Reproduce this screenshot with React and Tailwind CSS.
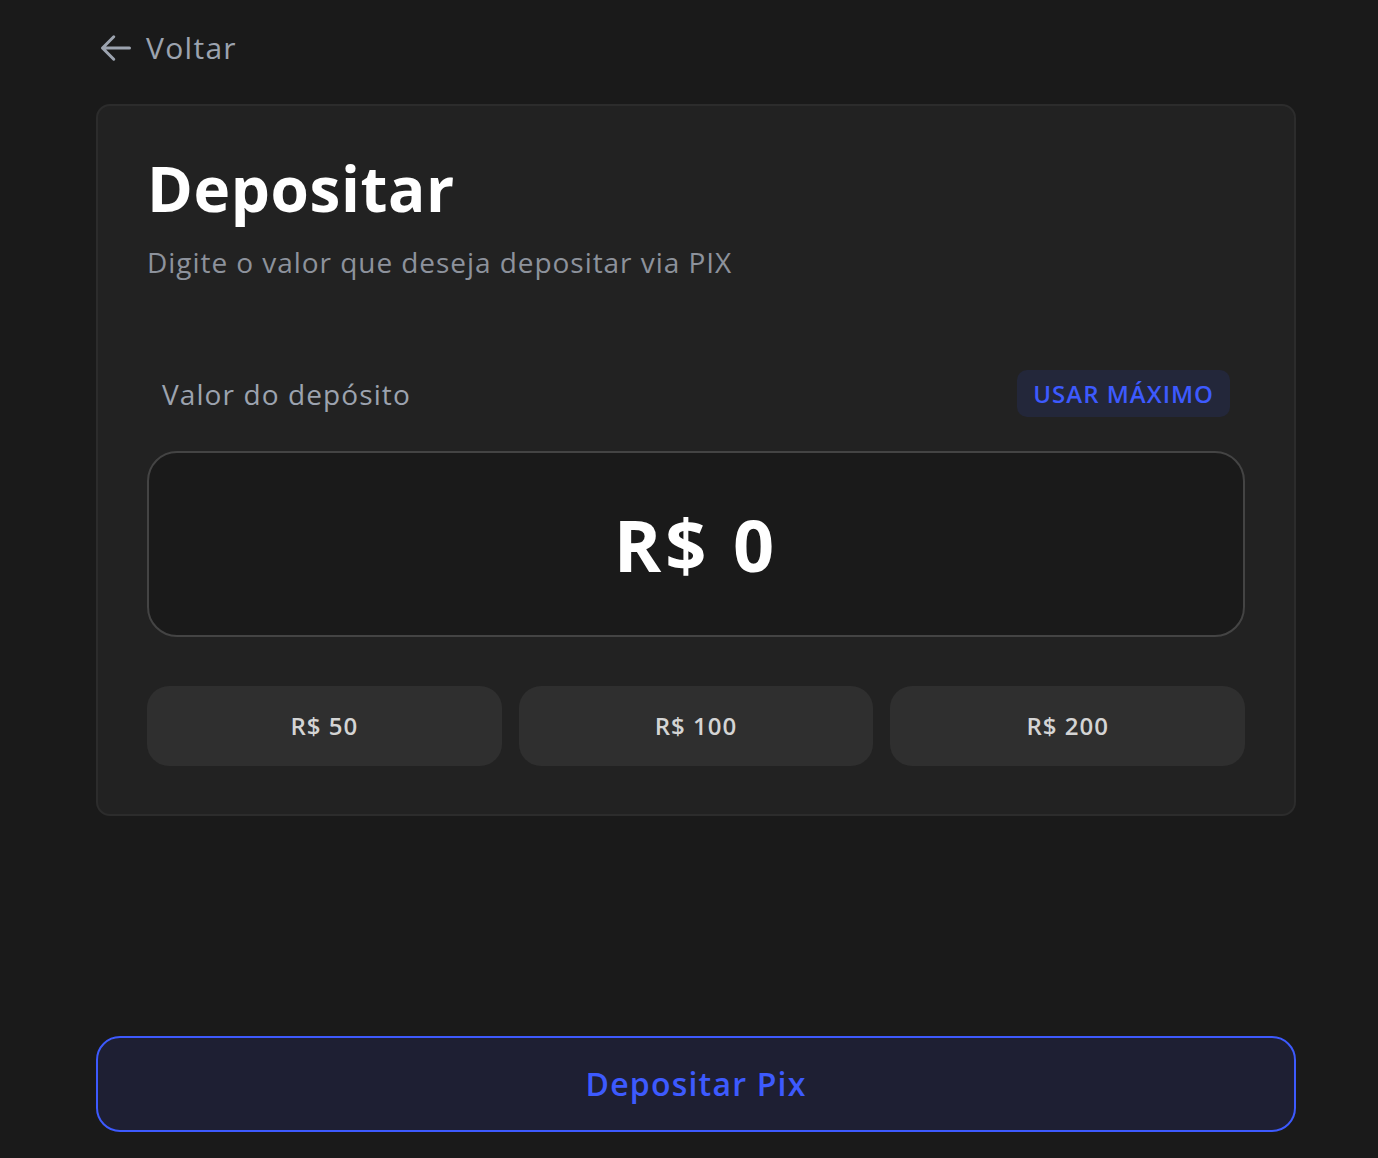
import React from "react";

export default function App() {
  return (
    <div className="flex h-[1158px] w-full flex-col bg-[#1a1a1a] font-['Open_Sans',sans-serif]">
      <div className="ml-[96px] w-[1200px] flex flex-col flex-1">
        <button className="mt-[26px] flex h-[44px] items-center gap-[12px] self-start pl-[2px] text-[#9ca3af]">
          <svg width="36" height="36" viewBox="0 0 24 24" fill="none" stroke="currentColor" strokeWidth="2" strokeLinecap="round" strokeLinejoin="round">
            <path d="M10.5 19.5 3 12m0 0 7.5-7.5M3 12h18" />
          </svg>
          <span className="text-[30px] leading-none tracking-[1.3px]">Voltar</span>
        </button>

        <div className="mt-[34px] rounded-[14px] border-2 border-[#2c2c2c] bg-[#222222] px-[49px] pb-[48px] pt-[42px]">
          <h1 className="text-[62px] font-bold leading-[80px] tracking-[0.6px] text-white">Depositar</h1>
          <p className="mt-[14px] text-[28px] leading-[40px] tracking-[0.95px] text-[#8d929c]">Digite o valor que deseja depositar via PIX</p>

          <div className="mt-[88px] flex items-center justify-between pl-[15px] pr-[15px]">
            <span className="text-[28px] leading-none tracking-[1.1px] text-[#9ca3af]">Valor do depósito</span>
            <button className="flex h-[47px] items-center rounded-[10px] bg-[#23273a] px-[16px] text-[24px] font-semibold tracking-[1px] text-[#3d5afe]">
              USAR MÁXIMO
            </button>
          </div>

          <div className="mt-[34px] flex h-[186px] items-center justify-center rounded-[30px] border-2 border-[#444444] bg-[#1a1a1a]">
            <span className="text-[72px] font-bold leading-none tracking-[4px] text-white">R$ 0</span>
          </div>

          <div className="mt-[49px] grid grid-cols-3 gap-[17px]">
            {["R$ 50", "R$ 100", "R$ 200"].map((v) => (
              <button key={v} className="flex h-[80px] items-center justify-center rounded-[22px] bg-[#2f2f2f] text-[24px] font-semibold tracking-[1px] text-[#d4d4d4]">
                {v}
              </button>
            ))}
          </div>
        </div>

        <button className="mt-auto mb-[26px] flex h-[96px] items-center justify-center rounded-[24px] border-2 border-[#3d5afe] bg-[#1e1f33] text-[32px] font-semibold tracking-[1.2px] text-[#3d5afe]">
          Depositar Pix
        </button>
      </div>
    </div>
  );
}
